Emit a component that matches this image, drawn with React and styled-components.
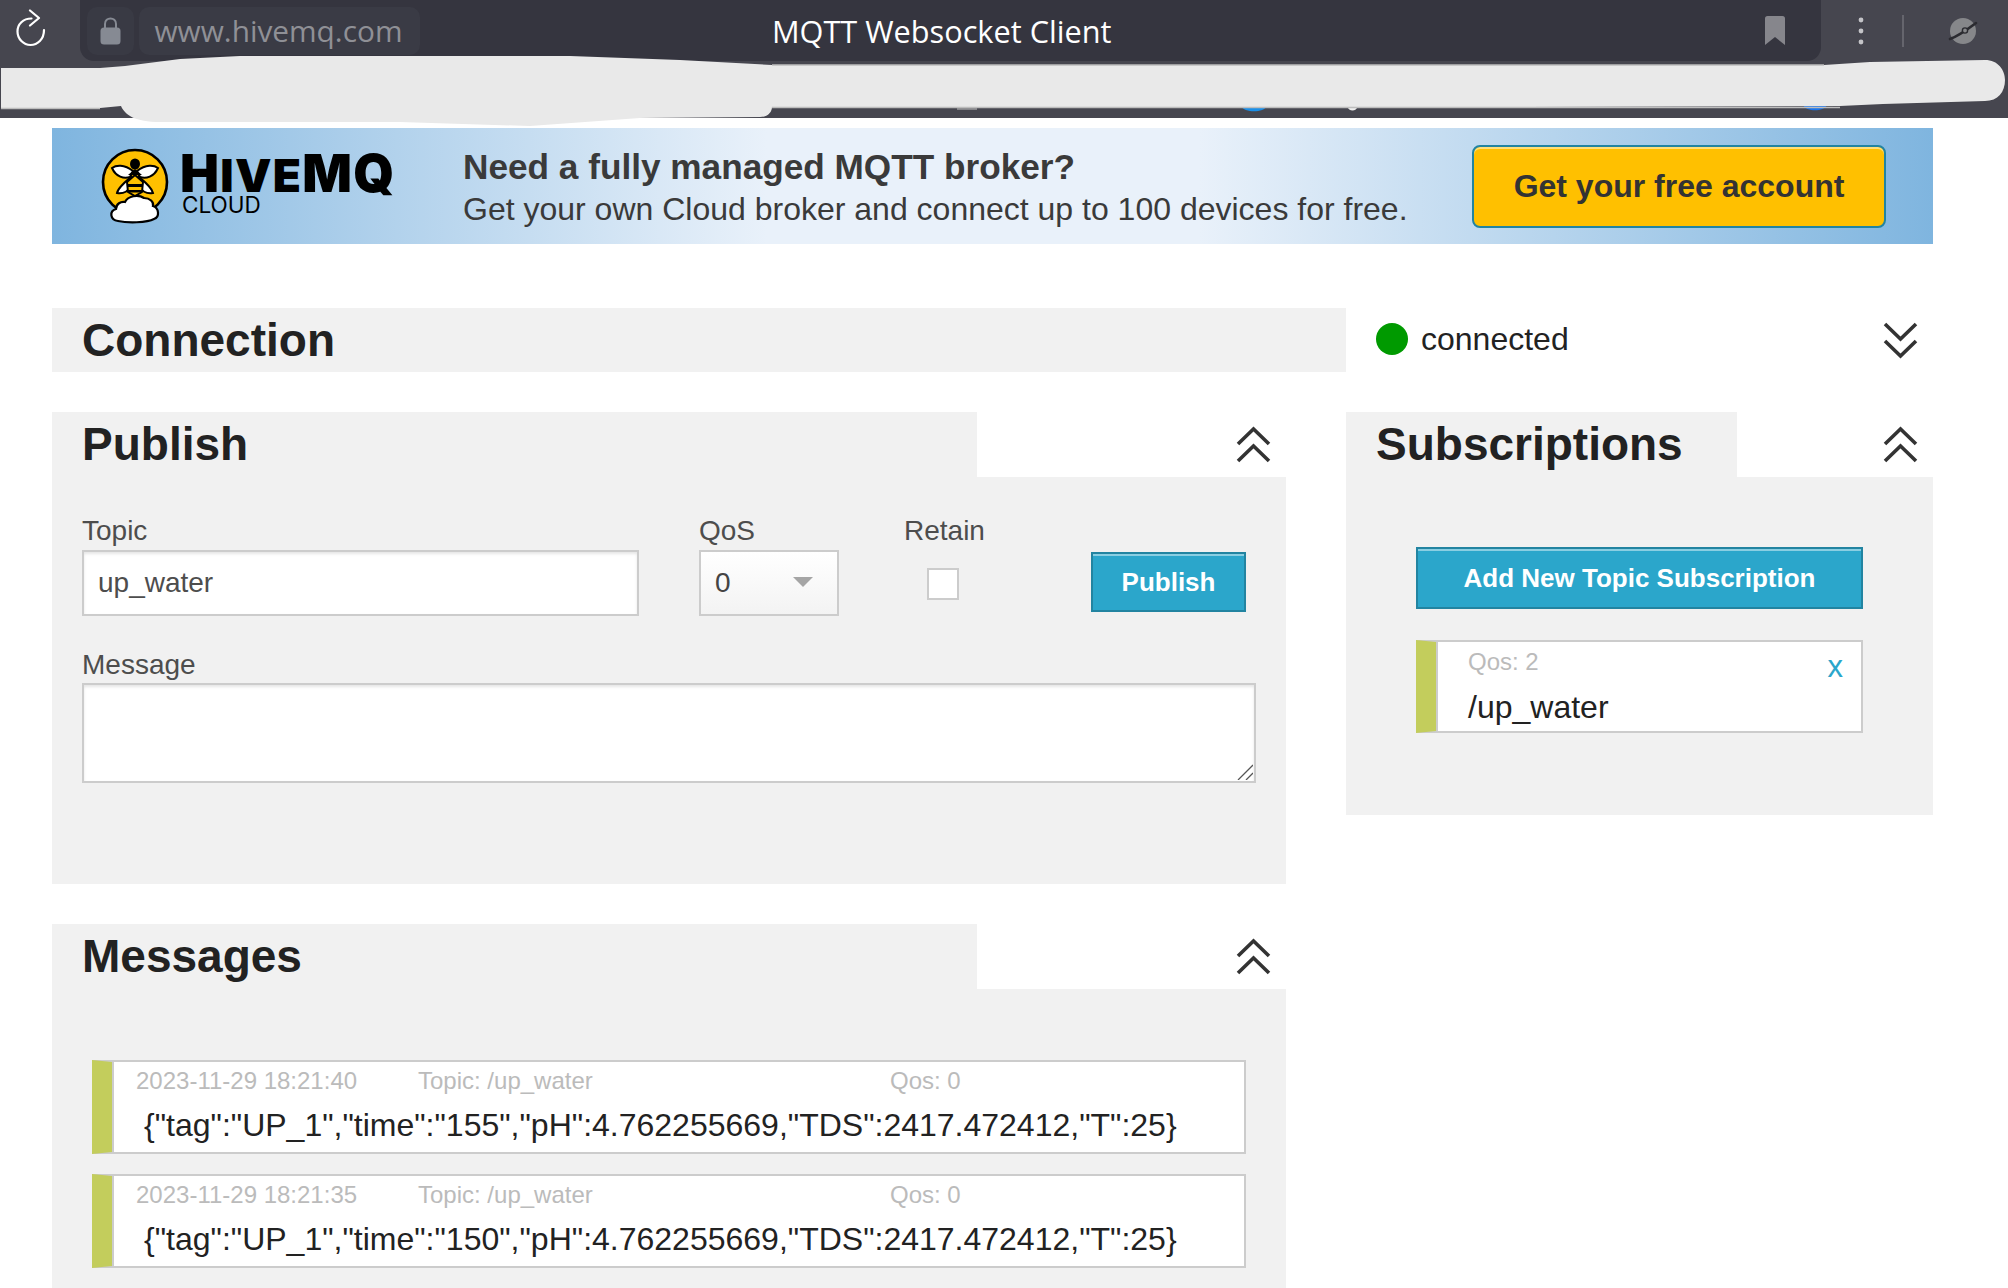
import styled, { createGlobalStyle } from "styled-components";

const GlobalStyle = createGlobalStyle`
  html, body {
    margin: 0;
    padding: 0;
    background: #fff;
  }
  body {
    width: 2008px;
    height: 1288px;
    overflow: hidden;
    font-family: "Liberation Sans", Arial, sans-serif;
    color: #222;
  }
  * {
    box-sizing: border-box;
  }
`;

const Page = styled.div`
  position: relative;
  width: 2008px;
  height: 1288px;
  overflow: hidden;
`;

/* browser chrome */
const BrowserBar = styled.div`
  display: flex;
  align-items: flex-start;
  height: 118px;
  background: #46464f;
  font-family: "Open Sans", sans-serif;
`;

const ReloadBox = styled.div`
  display: flex;
  justify-content: center;
  width: 80px;
  padding: 9px 18px 0 0;
`;

const AddressBar = styled.div`
  display: flex;
  align-items: center;
  width: 1741px;
  height: 61px;
  padding: 0 36px 0 7px;
  background: #35353f;
  border-radius: 0 0 14px 14px;
`;

const Chip = styled.div`
  display: flex;
  align-items: center;
  justify-content: center;
  height: 48px;
  margin-right: 5px;
  padding: ${(p) => (p.$wide ? "0 16px 0 14px" : "0")};
  width: ${(p) => (p.$wide ? "281px" : "47px")};
  background: ${(p) => (p.$wide ? "#3a3b45" : "#393a44")};
  border-radius: 10px;
  color: #8f9096;
  font-size: 29.8px;
  white-space: nowrap;
`;

const PageTitle = styled.div`
  margin-left: 347px;
  color: #fff;
  font-size: 30.7px;
  white-space: nowrap;
`;

const BookmarkBox = styled.div`
  display: flex;
  margin-left: auto;
`;

const BarTools = styled.div`
  display: flex;
  align-items: center;
  height: 61px;
  margin-left: 37px;
`;

const Separator = styled.div`
  width: 2px;
  height: 32px;
  margin: 0 42px 0 38px;
  background: #65656d;
`;

const Scribble = styled.svg`
  position: absolute;
  top: 0;
  left: 0;
  display: block;
`;

/* page content */
const Content = styled.div`
  width: 1881px;
  margin: 10px 0 0 52px;
`;

const Banner = styled.div`
  display: flex;
  align-items: center;
  height: 116px;
  background: linear-gradient(90deg, #7fb5df 0%, #e9f1fa 38%, #e9f1fa 61%, #7fb5df 100%);
`;

const Logo = styled.div`
  display: flex;
  align-items: flex-start;
  width: 411px;
  height: 116px;
  padding: 20px 0 0 48px;
`;

const LogoWords = styled.div`
  display: flex;
  flex-direction: column;
  margin: 0 0 0 12px;
  color: #000;
`;

const LogoName = styled.div`
  height: 39px;
  margin: 6px 0 0 -2px;
  font-family: "Inter", sans-serif;
  font-size: 52px;
  font-weight: 900;
  line-height: 39px;
  letter-spacing: 1.3px;
  white-space: nowrap;
`;

const LogoSmall = styled.span`
  font-size: 46px;
`;

const LogoCloud = styled.div`
  font-family: "Inter", sans-serif;
  font-size: 22.5px;
  line-height: 24px;
`;

const BannerText = styled.div`
  flex: 1;
  color: #3a3a3a;
  padding-top: 2px;
`;

const BannerTitle = styled.div`
  font-size: 35.2px;
  font-weight: 700;
  line-height: 44px;
  white-space: nowrap;
`;

const BannerLine = styled.div`
  font-size: 32px;
  line-height: 40px;
  white-space: nowrap;
`;

const FreeButton = styled.div`
  display: flex;
  align-items: center;
  justify-content: center;
  width: 414px;
  height: 83px;
  margin-right: 47px;
  background: #ffc000;
  border: 2px solid #2284a1;
  border-radius: 8px;
  box-shadow: inset 0 2px 0 #ffe07a;
  color: #333;
  font-size: 32px;
  font-weight: 700;
`;

const ConnectionRow = styled.div`
  display: flex;
  margin-top: 64px;
`;

const ConnectionBar = styled.div`
  display: flex;
  align-items: center;
  width: 1294px;
  height: 64px;
  padding-left: 30px;
  background: #f1f1f1;
`;

const PanelTitle = styled.h2`
  margin: 0;
  font-size: 46px;
  font-weight: 700;
  line-height: 64px;
  color: #222;
  white-space: nowrap;
`;

const Status = styled.div`
  flex: 1;
  display: flex;
  align-items: center;
  padding: 0 15px 0 30px;
`;

const StatusDot = styled.span`
  width: 32px;
  height: 32px;
  margin: -2px 13px 0 0;
  border-radius: 50%;
  background: #009a00;
`;

const StatusText = styled.span`
  flex: 1;
  margin-top: -2px;
  font-size: 32px;
  color: #222;
`;

const Columns = styled.div`
  display: flex;
  align-items: flex-start;
  gap: 60px;
  margin-top: 40px;
`;

const LeftColumn = styled.div`
  display: flex;
  flex-direction: column;
  gap: 40px;
  width: 1234px;
`;

const RightColumn = styled.div`
  width: 587px;
`;

const Panel = styled.section`
  background: #f1f1f1;
`;

const PanelHead = styled.div`
  display: flex;
  height: 65px;
`;

const PanelTab = styled.div`
  width: ${(p) => p.$width}px;
  padding-left: 30px;
  background: #f1f1f1;
`;

const PanelToggle = styled.div`
  flex: 1;
  display: flex;
  align-items: center;
  justify-content: flex-end;
  padding-right: 15px;
  background: #fff;
`;

const PublishBody = styled.div`
  height: 407px;
  padding: 36px 30px 0;
`;

const FormRow = styled.div`
  display: grid;
  grid-template-columns: 617px 205px 187px 155px;
`;

const FieldLabel = styled.div`
  height: 37px;
  font-size: 28px;
  line-height: 36px;
  color: #4d4d4d;
`;

const inputLook = `
  display: block;
  background: #fff;
  border: 2px solid #ccc;
  border-radius: 0;
  box-shadow: inset 0 2px 3px rgba(0, 0, 0, 0.1);
  font-family: "Liberation Sans", Arial, sans-serif;
  font-size: 28px;
  color: #4d4d4d;
  outline: none;
`;

const TextField = styled.input`
  ${inputLook}
  width: 557px;
  height: 66px;
  padding: 0 14px;
`;

const SelectField = styled.div`
  display: flex;
  align-items: center;
  justify-content: space-between;
  width: 140px;
  height: 66px;
  padding: 0 24px 0 14px;
  background: linear-gradient(180deg, #fff, #f3f3f3);
  border: 2px solid #ccc;
  font-size: 28px;
  color: #444;
`;

const SelectArrow = styled.span`
  width: 0;
  height: 0;
  margin-top: -2px;
  border-left: 10px solid transparent;
  border-right: 10px solid transparent;
  border-top: 10px solid #a5a5a5;
`;

const CheckField = styled.div`
  width: 32px;
  height: 32px;
  margin: 18px 0 0 23px;
  background: #fff;
  border: 2px solid #ccc;
`;

const BlueButton = styled.div`
  display: flex;
  align-items: center;
  justify-content: center;
  width: ${(p) => p.$width}px;
  height: ${(p) => p.$height}px;
  background: #2ba6cb;
  border: 2px solid #2284a1;
  box-shadow: inset 0 2px 0 rgba(255, 255, 255, 0.45);
  color: #fff;
  font-size: 26px;
  font-weight: 700;
  white-space: nowrap;
`;

const PublishButton = styled(BlueButton)`
  margin-top: 39px;
`;

const MessageLabel = styled(FieldLabel)`
  height: 36px;
  margin-top: 31px;
`;

const MessageWrap = styled.div`
  position: relative;
  width: 1174px;
`;

const MessageField = styled.textarea`
  ${inputLook}
  width: 1174px;
  height: 100px;
  padding: 10px 14px;
  resize: none;
`;

const ResizeGrip = styled.svg`
  position: absolute;
  right: 3px;
  bottom: 3px;
  display: block;
`;

const SubscriptionBody = styled.div`
  height: 338px;
  padding: 70px 70px 0;
`;

const Card = styled.div`
  background: #fff;
  border: 2px solid #ccc;
  border-left: 20px solid ${(p) => p.$color};
  box-shadow: inset 2px 0 0 #ccc;
`;

const SubCard = styled(Card)`
  position: relative;
  height: 93px;
  margin-top: 31px;
  padding: 2px 0 0 32px;
`;

const SubMeta = styled.div`
  font-size: 24px;
  line-height: 36px;
  color: #bbb;
`;

const SubTopic = styled.div`
  margin-top: 9px;
  font-size: 32px;
  line-height: 36px;
  color: #222;
`;

const RemoveMark = styled.span`
  position: absolute;
  top: 9px;
  right: 18px;
  font-size: 31px;
  line-height: 32px;
  color: #2ba6cb;
`;

const MessagesBody = styled.div`
  display: flex;
  flex-direction: column;
  gap: 20px;
  padding: 71px 40px 0;
`;

const MessageCard = styled(Card)`
  height: 94px;
`;

const MessageMeta = styled.div`
  display: flex;
  height: 38px;
  padding: 1px 0 0 24px;
  font-size: 24px;
  line-height: 36px;
  color: #bbb;
`;

const MetaCell = styled.span`
  width: ${(p) => p.$width}px;
  white-space: nowrap;
`;

const MessageBody = styled.div`
  padding: 7px 0 0 32px;
  font-size: 32px;
  line-height: 36px;
  color: #222;
  white-space: nowrap;
`;

const DoubleChevron = ({ down }) => (
  <svg width="35" height="38" viewBox="0 0 35 38" fill="none" stroke="#333" strokeWidth="3.6">
    <g transform={down ? "rotate(180 17.5 19)" : undefined}>
      <path d="M2 18 L17.5 3 L33 18" />
      <path d="M2 35 L17.5 20 L33 35" />
    </g>
  </svg>
);

const ReloadIcon = () => (
  <svg width="30" height="38" viewBox="0 0 30 38" fill="none" stroke="#fff" strokeWidth="2.2" strokeLinecap="round" strokeLinejoin="round">
    <path d="M15.5 9.5 C7 9.5 1.5 15 1.5 22.5 C1.5 30 7.5 36 14.5 36 C21.5 36 28 30.5 28 21" />
    <path d="M14 1.5 L23 9 L14 16.5" />
  </svg>
);

const LockIcon = () => (
  <svg width="21" height="28" viewBox="0 0 21 28">
    <path d="M5 12 V7 C5 -0.5 16 -0.5 16 7 V12" fill="none" stroke="#868a93" strokeWidth="2" />
    <rect x="0.5" y="10.5" width="20" height="17" rx="3.5" fill="#868a93" />
  </svg>
);

const BookmarkIcon = () => (
  <svg width="20" height="29" viewBox="0 0 20 29">
    <path d="M2.5 0 H17.5 A2.5 2.5 0 0 1 20 2.5 V29 L10 21 L0 29 V2.5 A2.5 2.5 0 0 1 2.5 0 Z" fill="#86868c" />
  </svg>
);

const MenuDots = () => (
  <svg width="6" height="30" viewBox="0 0 6 30" fill="#c4c4c8">
    <circle cx="3" cy="4" r="2.4" />
    <circle cx="3" cy="15" r="2.4" />
    <circle cx="3" cy="26" r="2.4" />
  </svg>
);

const ProfileIcon = () => (
  <svg width="34" height="30" viewBox="0 0 34 30">
    <circle cx="17" cy="15" r="13" fill="#86878a" />
    <path d="M4 23 C10 21 18 16 30 7" fill="none" stroke="#2b2b30" strokeWidth="2.6" strokeLinecap="round" />
    <circle cx="19" cy="14.5" r="2.6" fill="#86878a" stroke="#2b2b30" strokeWidth="1.4" />
  </svg>
);

const HiveLogo = () => (
  <svg width="70" height="76" viewBox="0 0 70 76">
    <circle cx="35" cy="34" r="32" fill="#ffc000" stroke="#000" strokeWidth="2.6" />
    <path d="M33 23 C24 16 16 17 12 20 C16 29 24 31 30 29 Z" fill="#fff" stroke="#000" strokeWidth="2" />
    <path d="M37 23 C46 16 54 17 58 20 C54 29 46 31 40 29 Z" fill="#fff" stroke="#000" strokeWidth="2" />
    <path d="M31 29 C24 35 18 40 17 45 C24 46 29 43 30 38 Z" fill="#fff" stroke="#000" strokeWidth="2" />
    <path d="M39 29 C46 35 52 40 53 45 C46 46 41 43 40 38 Z" fill="#fff" stroke="#000" strokeWidth="2" />
    <ellipse cx="35" cy="16" rx="5" ry="5.5" fill="#000" />
    <path d="M28 27 L35 21 L42 27 Z" fill="#000" />
    <path d="M27 34 L35 27 L43 34 L42 44 L35 48 L28 44 Z" fill="#ffc000" stroke="#000" strokeWidth="2" />
    <path d="M27 36 H43 V39 H27 Z M28 42 H42 V44.5 H28 Z" fill="#000" />
    <path d="M32 48 H38 L35 52 Z" fill="#000" />
    <path d="M18 73 C10 72 9 63 16 61 C16 56 21 53 25 54 C28 48 38 46 44 50 C50 50 54 54 53 58 C59 60 60 69 54 71 C47 75 27 75 18 73 Z" fill="#fff" stroke="#000" strokeWidth="2.2" />
  </svg>
);

const ScribbleShape = () => (
  <Scribble width="2008" height="130" viewBox="0 0 2008 130">
    <path d="M957 107 H977 V110 H957 Z" fill="#86868a" />
    <path d="M1241 106 C1244 113 1264 113 1267 106 Z" fill="#1a8fe8" />
    <path d="M1347 106 C1349 112 1356 112 1358 106 Z" fill="#eee" />
    <path d="M1803 105 C1806 112 1824 112 1827 105 Z" fill="#1a73e8" />
    <path
      d="M1 68 H100 L125 66 L180 59 L240 56 L570 56 L680 60 L772 65 H1824 L1870 62 L1985 60 C1998 60 2005 70 2005 80 C2005 92 1998 101 1985 101 L1883 104 L1840 106 L1500 107 H772 C772 112 768 117 760 117 L640 118 L530 126 L400 122 L160 122 C135 122 125 115 121 106 L100 108 H1 Z"
      fill="#e9e9e9"
    />
    <path d="M772 107.5 H1840 M1 108.5 H100 M772 65 H1824" stroke="#bdbdbd" strokeWidth="1.4" fill="none" />
  </Scribble>
);

const messages = [
  { id: 1, date: "2023-11-29 18:21:40", time: "155" },
  { id: 2, date: "2023-11-29 18:21:35", time: "150" },
];

const App = () => {
  return (
    <Page>
      <GlobalStyle />
      <BrowserBar>
        <ReloadBox>
          <ReloadIcon />
        </ReloadBox>
        <AddressBar>
          <Chip>
            <LockIcon />
          </Chip>
          <Chip $wide>www.hivemq.com</Chip>
          <PageTitle>MQTT Websocket Client</PageTitle>
          <BookmarkBox>
            <BookmarkIcon />
          </BookmarkBox>
        </AddressBar>
        <BarTools>
          <MenuDots />
          <Separator />
          <ProfileIcon />
        </BarTools>
      </BrowserBar>
      <ScribbleShape />

      <Content>
        <Banner>
          <Logo>
            <HiveLogo />
            <LogoWords>
              <LogoName>
                H<LogoSmall>IVE</LogoSmall>MQ
              </LogoName>
              <LogoCloud>CLOUD</LogoCloud>
            </LogoWords>
          </Logo>
          <BannerText>
            <BannerTitle>Need a fully managed MQTT broker?</BannerTitle>
            <BannerLine>Get your own Cloud broker and connect up to 100 devices for free.</BannerLine>
          </BannerText>
          <FreeButton>Get your free account</FreeButton>
        </Banner>

        <ConnectionRow>
          <ConnectionBar>
            <PanelTitle>Connection</PanelTitle>
          </ConnectionBar>
          <Status>
            <StatusDot />
            <StatusText>connected</StatusText>
            <DoubleChevron down />
          </Status>
        </ConnectionRow>

        <Columns>
          <LeftColumn>
            <Panel>
              <PanelHead>
                <PanelTab $width={925}>
                  <PanelTitle>Publish</PanelTitle>
                </PanelTab>
                <PanelToggle>
                  <DoubleChevron />
                </PanelToggle>
              </PanelHead>
              <PublishBody>
                <FormRow>
                  <div>
                    <FieldLabel>Topic</FieldLabel>
                    <TextField defaultValue="up_water" />
                  </div>
                  <div>
                    <FieldLabel>QoS</FieldLabel>
                    <SelectField>
                      0
                      <SelectArrow />
                    </SelectField>
                  </div>
                  <div>
                    <FieldLabel>Retain</FieldLabel>
                    <CheckField />
                  </div>
                  <PublishButton $width={155} $height={60}>
                    Publish
                  </PublishButton>
                </FormRow>
                <MessageLabel>Message</MessageLabel>
                <MessageWrap>
                  <MessageField />
                  <ResizeGrip width="16" height="16" viewBox="0 0 16 16" stroke="#555" strokeWidth="1.3">
                    <path d="M1 16 L16 1 M9 16 L16 9" />
                  </ResizeGrip>
                </MessageWrap>
              </PublishBody>
            </Panel>

            <Panel>
              <PanelHead>
                <PanelTab $width={925}>
                  <PanelTitle>Messages</PanelTitle>
                </PanelTab>
                <PanelToggle>
                  <DoubleChevron />
                </PanelToggle>
              </PanelHead>
              <MessagesBody>
                {messages.map((m) => (
                  <MessageCard key={m.id} $color="#c3cd5c">
                    <MessageMeta>
                      <MetaCell $width={282}>{m.date}</MetaCell>
                      <MetaCell $width={472}>Topic: /up_water</MetaCell>
                      <MetaCell $width={100}>Qos: 0</MetaCell>
                    </MessageMeta>
                    <MessageBody>
                      {`{"tag":"UP_1","time":"${m.time}","pH":4.762255669,"TDS":2417.472412,"T":25}`}
                    </MessageBody>
                  </MessageCard>
                ))}
                {/* only the top edge of the next card shows in the window */}
                <MessageCard $color="#c3cd5c" />
              </MessagesBody>
            </Panel>
          </LeftColumn>

          <RightColumn>
            <Panel>
              <PanelHead>
                <PanelTab $width={391}>
                  <PanelTitle>Subscriptions</PanelTitle>
                </PanelTab>
                <PanelToggle>
                  <DoubleChevron />
                </PanelToggle>
              </PanelHead>
              <SubscriptionBody>
                <BlueButton $width={447} $height={62}>
                  Add New Topic Subscription
                </BlueButton>
                <SubCard $color="#c3cd5c">
                  <SubMeta>Qos: 2</SubMeta>
                  <SubTopic>/up_water</SubTopic>
                  <RemoveMark>x</RemoveMark>
                </SubCard>
              </SubscriptionBody>
            </Panel>
          </RightColumn>
        </Columns>
      </Content>
    </Page>
  );
};

export default App;
